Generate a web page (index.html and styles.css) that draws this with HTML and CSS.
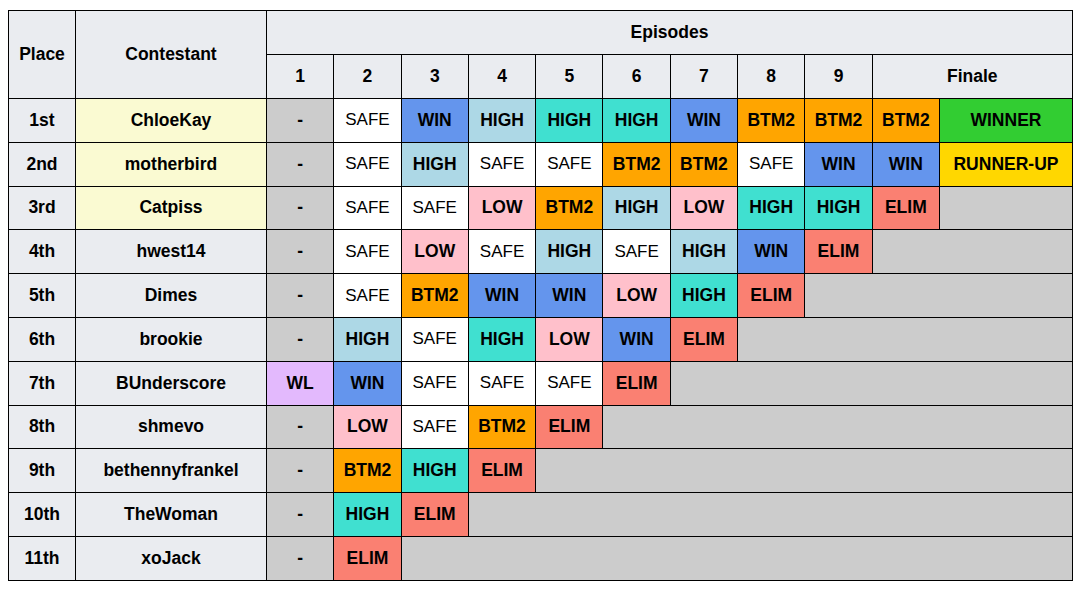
FILE: index.html
```html
<!DOCTYPE html>
<html>
<head>
<meta charset="utf-8">
<link rel="stylesheet" href="styles.css">
</head>
<body>
<table class="results">
<colgroup>
<col class="c-place"><col class="c-name">
<col class="c-ep"><col class="c-ep"><col class="c-ep"><col class="c-ep"><col class="c-ep"><col class="c-ep"><col class="c-ep"><col class="c-ep"><col class="c-ep"><col class="c-ep">
<col class="c-final">
</colgroup>
<thead>
<tr class="hrow">
<th rowspan="2">Place</th>
<th rowspan="2">Contestant</th>
<th colspan="11">Episodes</th>
</tr>
<tr class="hrow">
<th>1</th><th>2</th><th>3</th><th>4</th><th>5</th><th>6</th><th>7</th><th>8</th><th>9</th><th colspan="2">Finale</th>
</tr>
</thead>
<tbody>
<tr>
<th>1st</th><td class="name top">ChloeKay</td>
<td class="na">-</td><td class="safe">SAFE</td><td class="win">WIN</td><td class="high">HIGH</td><td class="high2">HIGH</td><td class="high2">HIGH</td><td class="win">WIN</td><td class="btm">BTM2</td><td class="btm">BTM2</td><td class="btm">BTM2</td><td class="winner">WINNER</td>
</tr>
<tr>
<th>2nd</th><td class="name top">motherbird</td>
<td class="na">-</td><td class="safe">SAFE</td><td class="high">HIGH</td><td class="safe">SAFE</td><td class="safe">SAFE</td><td class="btm">BTM2</td><td class="btm">BTM2</td><td class="safe">SAFE</td><td class="win">WIN</td><td class="win">WIN</td><td class="runner">RUNNER-UP</td>
</tr>
<tr>
<th>3rd</th><td class="name top">Catpiss</td>
<td class="na">-</td><td class="safe">SAFE</td><td class="safe">SAFE</td><td class="low">LOW</td><td class="btm">BTM2</td><td class="high">HIGH</td><td class="low">LOW</td><td class="high2">HIGH</td><td class="high2">HIGH</td><td class="elim">ELIM</td><td class="out"></td>
</tr>
<tr>
<th>4th</th><td class="name">hwest14</td>
<td class="na">-</td><td class="safe">SAFE</td><td class="low">LOW</td><td class="safe">SAFE</td><td class="high">HIGH</td><td class="safe">SAFE</td><td class="high">HIGH</td><td class="win">WIN</td><td class="elim">ELIM</td><td class="out" colspan="2"></td>
</tr>
<tr>
<th>5th</th><td class="name">Dimes</td>
<td class="na">-</td><td class="safe">SAFE</td><td class="btm">BTM2</td><td class="win">WIN</td><td class="win">WIN</td><td class="low">LOW</td><td class="high2">HIGH</td><td class="elim">ELIM</td><td class="out" colspan="3"></td>
</tr>
<tr>
<th>6th</th><td class="name">brookie</td>
<td class="na">-</td><td class="high">HIGH</td><td class="safe">SAFE</td><td class="high2">HIGH</td><td class="low">LOW</td><td class="win">WIN</td><td class="elim">ELIM</td><td class="out" colspan="4"></td>
</tr>
<tr>
<th>7th</th><td class="name">BUnderscore</td>
<td class="wl">WL</td><td class="win">WIN</td><td class="safe">SAFE</td><td class="safe">SAFE</td><td class="safe">SAFE</td><td class="elim">ELIM</td><td class="out" colspan="5"></td>
</tr>
<tr>
<th>8th</th><td class="name">shmevo</td>
<td class="na">-</td><td class="low">LOW</td><td class="safe">SAFE</td><td class="btm">BTM2</td><td class="elim">ELIM</td><td class="out" colspan="6"></td>
</tr>
<tr>
<th>9th</th><td class="name">bethennyfrankel</td>
<td class="na">-</td><td class="btm">BTM2</td><td class="high2">HIGH</td><td class="elim">ELIM</td><td class="out" colspan="7"></td>
</tr>
<tr>
<th>10th</th><td class="name">TheWoman</td>
<td class="na">-</td><td class="high2">HIGH</td><td class="elim">ELIM</td><td class="out" colspan="8"></td>
</tr>
<tr>
<th>11th</th><td class="name">xoJack</td>
<td class="na">-</td><td class="elim">ELIM</td><td class="out" colspan="9"></td>
</tr>
</tbody>
</table>
</body>
</html>
```

FILE: styles.css
```css
html, body {
  margin: 0;
  padding: 0;
  background: #ffffff;
}

.results {
  margin: 10px 0 0 8px;
  width: 1063px;
  border-collapse: collapse;
  table-layout: fixed;
  font-family: "Liberation Sans", Arial, sans-serif;
  font-size: 17.5px;
  color: #000;
}

.c-place { width: 67px; }
.c-name { width: 191px; }
.c-ep { width: 67.3px; }
.c-final { width: 133px; }

.results th,
.results td {
  border: 1px solid #000;
  padding: 0 4px;
  text-align: center;
  vertical-align: middle;
  font-weight: bold;
  white-space: nowrap;
}

.results th {
  background: #eaecf0;
}

.hrow { height: 44px; }
.results tbody tr { height: 43.8px; }

.name { background: #eaecf0; }
.name.top { background: #fafad2; }

.na { background: #cccccc; }
.out { background: #cccccc; }
.results td.safe { background: #ffffff; font-weight: normal; font-size: 17px; }
.win { background: #6495ed; }
.high { background: #add8e6; }
.high2 { background: #40e0d0; }
.btm { background: #ffa500; }
.low { background: #ffc0cb; }
.elim { background: #fa8072; }
.winner { background: #32cd32; }
.runner { background: #ffd700; }
.wl { background: #e3b9fd; }
```
